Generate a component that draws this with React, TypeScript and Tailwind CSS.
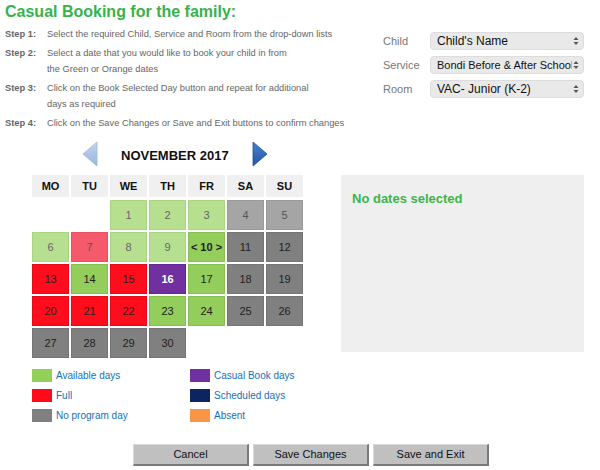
import React from "react";

const steps = [
  { label: "Step 1:", lines: ["Select the required Child, Service and Room from the drop-down lists"] },
  { label: "Step 2:", lines: ["Select a date that you would like to book your child in from", "the Green or Orange dates"] },
  { label: "Step 3:", lines: ["Click on the Book Selected Day button and repeat for additional", "days as required"] },
  { label: "Step 4:", lines: ["Click on the Save Changes or Save and Exit buttons to confirm changes"] },
];

const selects = [
  { label: "Child", value: "Child's Name", cls: "text-[12px]" },
  { label: "Service", value: "Bondi Before & After School", cls: "text-[11px]" },
  { label: "Room", value: "VAC- Junior (K-2)", cls: "text-[12px]" },
];

// cell styles by type
const cellCls: Record<string, string> = {
  avail: "bg-[#b7df90] border-[#a9d483] text-[#666]",
  open: "bg-[#93cd5b] border-[#86bf50] text-[#222]",
  nop: "bg-[#a5a5a5] border-[#999] text-[#555]",
  off: "bg-[#808080] border-[#757575] text-[#222]",
  full: "bg-[#ff0d1d] border-[#e60a18] text-[#222]",
  fullLight: "bg-[#f45a6b] border-[#e65060] text-[#555]",
  casual: "bg-[#7030a0] border-[#652a92] text-white font-bold",
  empty: "bg-transparent border-transparent",
};

const weeks: [string, string][][] = [
  [["", "empty"], ["", "empty"], ["1", "avail"], ["2", "avail"], ["3", "avail"], ["4", "nop"], ["5", "nop"]],
  [["6", "avail"], ["7", "fullLight"], ["8", "avail"], ["9", "avail"], ["< 10 >", "open"], ["11", "off"], ["12", "off"]],
  [["13", "full"], ["14", "open"], ["15", "full"], ["16", "casual"], ["17", "open"], ["18", "off"], ["19", "off"]],
  [["20", "full"], ["21", "full"], ["22", "full"], ["23", "open"], ["24", "open"], ["25", "off"], ["26", "off"]],
  [["27", "off"], ["28", "off"], ["29", "off"], ["30", "off"], ["", "empty"], ["", "empty"], ["", "empty"]],
];

const legend = [
  ["Available days", "bg-[#92d05a]"],
  ["Casual Book days", "bg-[#7030a0]"],
  ["Full", "bg-[#ff0a1a]"],
  ["Scheduled days", "bg-[#0c2560]"],
  ["No program day", "bg-[#808080]"],
  ["Absent", "bg-[#f79646]"],
];

const Arrow = ({ dir }: { dir: "left" | "right" }) => (
  <svg width="16" height="26" viewBox="0 0 16 26">
    <defs>
      <linearGradient id={`g-${dir}`} x1="0" y1="0" x2="0" y2="1">
        <stop offset="0" stopColor={dir === "left" ? "#c2d6ee" : "#4a82cf"} />
        <stop offset="1" stopColor={dir === "left" ? "#98b6dd" : "#1f56a6"} />
      </linearGradient>
    </defs>
    {dir === "left" ? (
      <polygon points="15,1 1,13 15,25" fill={`url(#g-${dir})`} stroke="#9cb6d8" strokeWidth="0.8" />
    ) : (
      <polygon points="1,1 15,13 1,25" fill={`url(#g-${dir})`} stroke="#1d4f99" strokeWidth="0.8" />
    )}
  </svg>
);

export default function App() {
  return (
    <div className="w-[600px] h-[470px] bg-white overflow-hidden font-['Liberation_Sans',Arial,sans-serif] relative">
      <h1 className="pl-[5px] pt-[1px] text-[16px] leading-[22px] font-bold text-[#37b34a]">Casual Booking for the family:</h1>

      <div className="flex">
        <div className="pl-[5px] pt-[3px] flex flex-col gap-[3px] w-[370px]">
          {steps.map((s) => (
            <div key={s.label} className="flex text-[9.3px] leading-[16px] text-[#666]">
              <div className="w-[42px] shrink-0 font-bold">{s.label}</div>
              <div>
                {s.lines.map((l) => (
                  <div key={l} className="whitespace-nowrap">{l}</div>
                ))}
              </div>
            </div>
          ))}
        </div>

        <div className="pl-[13px] pt-[9px] flex flex-col gap-[6px]">
          {selects.map((s) => (
            <div key={s.label} className="flex items-center">
              <div className="w-[47px] text-[11px] text-[#777]">{s.label}</div>
              <div className="w-[154px] h-[18px] rounded-[4px] bg-[#e9e9e9] border border-[#dcdcdc] flex items-center pl-[6px] pr-[4px]">
                <span className={`flex-1 overflow-hidden whitespace-nowrap text-[#111] ${s.cls}`}>{s.value}</span>
                <svg width="6" height="10" viewBox="0 0 6 10" className="shrink-0 ml-[1px]">
                  <polygon points="3,1 5.5,4 0.5,4" fill="#555" />
                  <polygon points="3,9 5.5,6 0.5,6" fill="#555" />
                </svg>
              </div>
            </div>
          ))}
        </div>
      </div>

      <div className="flex mt-[9px]">
        <div className="pl-[32px]">
          <div className="flex items-center h-[26px] pl-[50px] gap-[23px] translate-y-[1px]">
            <Arrow dir="left" />
            <span className="text-[13px] font-bold text-[#111] pt-[3px]">NOVEMBER 2017</span>
            <Arrow dir="right" />
          </div>
          <div className="mt-[9px] grid grid-cols-[repeat(7,37px)] gap-x-[2px]">
            {["MO", "TU", "WE", "TH", "FR", "SA", "SU"].map((d) => (
              <div key={d} className="h-[22px] bg-[#f0f0f0] flex items-center justify-center text-[11px] font-bold text-[#111]">{d}</div>
            ))}
          </div>
          <div className="mt-[3px] grid grid-cols-[repeat(7,37px)] gap-[2px]">
            {weeks.flat().map(([n, t], i) => (
              <div key={i} className={`h-[30px] border flex items-center justify-center text-[11px] ${cellCls[t]} ${n.startsWith("<") ? "font-bold text-[#222]" : ""}`}>
                {n}
              </div>
            ))}
          </div>
        </div>

        <div className="ml-[38px] mt-[35px] w-[243px] h-[177px] bg-[#efefef] pl-[11px] pt-[14px]">
          <div className="text-[13px] font-bold text-[#3ab54a]">No dates selected</div>
        </div>
      </div>

      <div className="mt-[11px] pl-[32px] grid grid-cols-[158px_200px] gap-y-[7px]">
        {legend.map(([label, c]) => (
          <div key={label} className="flex items-center gap-[4px] h-[13px]">
            <div className={`w-[20px] h-[13px] ${c}`} />
            <span className="text-[10px] text-[#1570b5]">{label}</span>
          </div>
        ))}
      </div>

      <div className="mt-[22px] pl-[133px] flex gap-[4px]">
        {["Cancel", "Save Changes", "Save and Exit"].map((b) => (
          <button key={b} className="w-[116px] h-[22px] bg-[#c0c0c0] border-t border-l border-t-[#d8d8d8] border-l-[#d8d8d8] border-b-2 border-r-2 border-b-[#7a7a7a] border-r-[#7a7a7a] text-[11px] text-[#111]">
            {b}
          </button>
        ))}
      </div>
    </div>
  );
}
